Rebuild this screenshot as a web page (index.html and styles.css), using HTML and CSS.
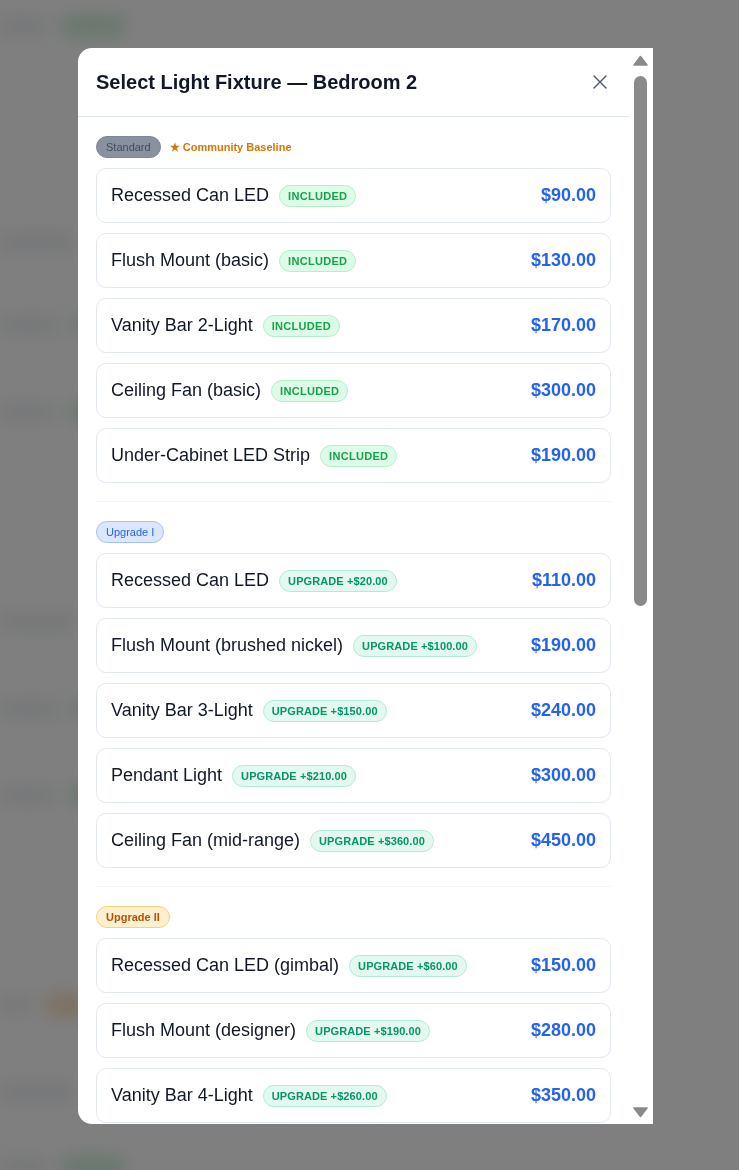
FILE: index.html
```html
<!DOCTYPE html>
<html lang="en">
<head>
<meta charset="utf-8">
<title>Select Light Fixture</title>
<link rel="stylesheet" href="styles.css">
</head>
<body>
<div class="page">
  <div class="bg-row r1"><span class="bg-text w40"></span><span class="bg-pill green"></span></div>
  <div class="bg-row r2"><span class="bg-text w70"></span></div>
  <div class="bg-row r3"><span class="bg-text w60"></span><span class="bg-pill green small"></span></div>
  <div class="bg-row r4"><span class="bg-text w50"></span><span class="bg-pill green"></span></div>
  <div class="bg-row r5"><span class="bg-text w70"></span></div>
  <div class="bg-row r6"><span class="bg-text w60"></span><span class="bg-pill green small"></span></div>
  <div class="bg-row r7"><span class="bg-text w50"></span><span class="bg-pill green"></span></div>
  <div class="bg-row r8"><span class="bg-text w30"></span><span class="bg-pill orange"></span></div>
  <div class="bg-row r9"><span class="bg-text w70"></span></div>
  <div class="bg-row r10"><span class="bg-text w40"></span><span class="bg-pill green"></span></div>
</div>
<div class="overlay">
  <div class="modal">
    <div class="modal-scroll">
      <div class="modal-header">
        <h2 class="modal-title">Select Light Fixture — Bedroom 2</h2>
        <button class="close-btn" aria-label="Close">
          <svg width="14" height="14" viewBox="0 0 14 14" fill="none" stroke="#4b5563" stroke-width="1.4" stroke-linecap="round"><path d="M1 1L13 13M13 1L1 13"/></svg>
        </button>
      </div>
      <div class="modal-body">
        <section class="tier">
          <div class="tier-head">
            <span class="tier-badge standard">Standard</span>
            <span class="baseline">★ Community Baseline</span>
          </div>
          <div class="rows">
            <div class="row"><span class="name">Recessed Can LED</span><span class="tag included">INCLUDED</span><span class="price">$90.00</span></div>
            <div class="row"><span class="name">Flush Mount (basic)</span><span class="tag included">INCLUDED</span><span class="price">$130.00</span></div>
            <div class="row"><span class="name">Vanity Bar 2-Light</span><span class="tag included">INCLUDED</span><span class="price">$170.00</span></div>
            <div class="row"><span class="name">Ceiling Fan (basic)</span><span class="tag included">INCLUDED</span><span class="price">$300.00</span></div>
            <div class="row"><span class="name">Under-Cabinet LED Strip</span><span class="tag included">INCLUDED</span><span class="price">$190.00</span></div>
          </div>
        </section>
        <section class="tier">
          <div class="tier-head">
            <span class="tier-badge up1">Upgrade I</span>
          </div>
          <div class="rows">
            <div class="row"><span class="name">Recessed Can LED</span><span class="tag upgrade">UPGRADE +$20.00</span><span class="price">$110.00</span></div>
            <div class="row"><span class="name">Flush Mount (brushed nickel)</span><span class="tag upgrade">UPGRADE +$100.00</span><span class="price">$190.00</span></div>
            <div class="row"><span class="name">Vanity Bar 3-Light</span><span class="tag upgrade">UPGRADE +$150.00</span><span class="price">$240.00</span></div>
            <div class="row"><span class="name">Pendant Light</span><span class="tag upgrade">UPGRADE +$210.00</span><span class="price">$300.00</span></div>
            <div class="row"><span class="name">Ceiling Fan (mid-range)</span><span class="tag upgrade">UPGRADE +$360.00</span><span class="price">$450.00</span></div>
          </div>
        </section>
        <section class="tier">
          <div class="tier-head">
            <span class="tier-badge up2">Upgrade II</span>
          </div>
          <div class="rows">
            <div class="row"><span class="name">Recessed Can LED (gimbal)</span><span class="tag upgrade">UPGRADE +$60.00</span><span class="price">$150.00</span></div>
            <div class="row"><span class="name">Flush Mount (designer)</span><span class="tag upgrade">UPGRADE +$190.00</span><span class="price">$280.00</span></div>
            <div class="row"><span class="name">Vanity Bar 4-Light</span><span class="tag upgrade">UPGRADE +$260.00</span><span class="price">$350.00</span></div>
          </div>
        </section>
      </div>
    </div>
    <div class="scrollbar" aria-hidden="true">
      <svg class="sb-arrow" width="15" height="11" viewBox="0 0 15 11"><path d="M7.5 1.5L14 10H1Z" fill="#8a8a8a" stroke="#8a8a8a" stroke-width="1.5" stroke-linejoin="round"/></svg>
      <div class="sb-track"><div class="sb-thumb"></div></div>
      <svg class="sb-arrow" width="15" height="11" viewBox="0 0 15 11"><path d="M7.5 9.5L14 1H1Z" fill="#8a8a8a" stroke="#8a8a8a" stroke-width="1.5" stroke-linejoin="round"/></svg>
    </div>
  </div>
</div>
</body>
</html>
```

FILE: styles.css
```css
* { box-sizing: border-box; }
html, body { margin: 0; padding: 0; }
body {
  font-family: "Liberation Sans", Arial, sans-serif;
  background: #ffffff;
  height: 1170px;
  overflow: hidden;
}

/* blurred background page */
.page {
  filter: blur(9px);
  padding: 18px 0 0 0;
}
.bg-row {
  display: flex;
  align-items: center;
  gap: 14px;
  height: 16px;
}
.bg-text { display: block; height: 12px; background: #e2e5e9; border-radius: 6px; }
.w30 { width: 30px; } .w40 { width: 46px; } .w50 { width: 55px; } .w60 { width: 60px; } .w70 { width: 75px; }
.bg-pill { display: block; height: 20px; width: 66px; border-radius: 10px; }
.bg-pill.small { width: 24px; }
.bg-pill.green { background: #cdecd5; }
.bg-pill.orange { background: #f6dfb6; width: 44px; }
.r2 { margin-top: 200px; }
.r3 { margin-top: 67px; }
.r4 { margin-top: 71px; }
.r5 { margin-top: 194px; }
.r6 { margin-top: 71px; }
.r7 { margin-top: 70px; }
.r8 { margin-top: 194px; }
.r9 { margin-top: 71px; }
.r10 { margin-top: 59px; }

.overlay {
  position: fixed;
  inset: 0;
  background: rgba(0, 0, 0, 0.5);
  padding: 48px 0 0 78px;
}
.modal {
  width: 575px;
  height: 1076px;
  background: #ffffff;
  border-radius: 14px 0 0 14px;
  overflow: hidden;
  display: flex;
}
.modal-scroll {
  width: 552px;
  flex: none;
  height: 100%;
  overflow: hidden;
}
.modal-header {
  display: flex;
  align-items: center;
  justify-content: space-between;
  height: 69px;
  padding: 0 23px 0 18px;
  border-bottom: 1px solid #e2e8f0;
}
.modal-title {
  margin: 0;
  font-size: 20px;
  font-weight: 700;
  color: #111827;
  line-height: 28px;
}
.close-btn {
  border: 0;
  background: none;
  padding: 0;
  width: 14px;
  height: 14px;
  display: flex;
  cursor: pointer;
}
.modal-body { padding: 0 19px 0 18px; }
.tier {
  padding: 19px 0 18px;
  border-bottom: 1px solid #f1f5f9;
}
.tier-head {
  display: flex;
  align-items: center;
  gap: 9px;
  height: 22px;
  margin-bottom: 10px;
}
.tier-badge {
  display: inline-flex;
  align-items: center;
  height: 22px;
  padding: 0 9px;
  border-radius: 11px;
  font-size: 11px;
  border: 1px solid transparent;
}
.tier-badge.standard { background: #8891a0; border-color: #7d8797; color: #434c5a; }
.tier-badge.up1 { background: #dbe7fe; border-color: #a6c2f5; color: #2563eb; }
.tier-badge.up2 { background: #fdf0cf; border-color: #f5d37a; color: #b45309; font-weight: 700; }
.baseline { font-size: 11px; font-weight: 700; color: #d97706; }
.rows { display: flex; flex-direction: column; gap: 10px; }
.row {
  display: flex;
  align-items: center;
  height: 55px;
  padding: 0 14px;
  border: 1px solid #e2e8f0;
  border-radius: 10px;
}
.name { font-size: 18px; color: #111827; }
.tag {
  margin-left: 10px;
  height: 22px;
  display: inline-flex;
  align-items: center;
  padding: 0 8px;
  border-radius: 11px;
  font-size: 11px;
  font-weight: 700;
  letter-spacing: 0.3px;
  border: 1px solid;
}
.tag.included { background: #dcfce7; border-color: #b7efcb; color: #16a34a; }
.tag.upgrade { background: #e3f8ef; border-color: #b3ecd6; color: #059669; letter-spacing: 0.1px; }
.price {
  margin-left: auto;
  font-size: 18px;
  font-weight: 700;
  color: #2563eb;
}

/* scrollbar column */
.scrollbar {
  width: 23px;
  flex: none;
  height: 100%;
  padding: 7px 5px 6px 3px;
  display: flex;
  flex-direction: column;
  align-items: center;
  gap: 10px;
  background: #ffffff;
}
.sb-arrow { flex: none; display: block; }
.sb-track { flex: 1; width: 15px; display: flex; flex-direction: column; }
.sb-thumb {
  width: 13px;
  margin: 0 auto;
  height: 530px;
  background: #8a8a8a;
  border-radius: 7px;
}
```
